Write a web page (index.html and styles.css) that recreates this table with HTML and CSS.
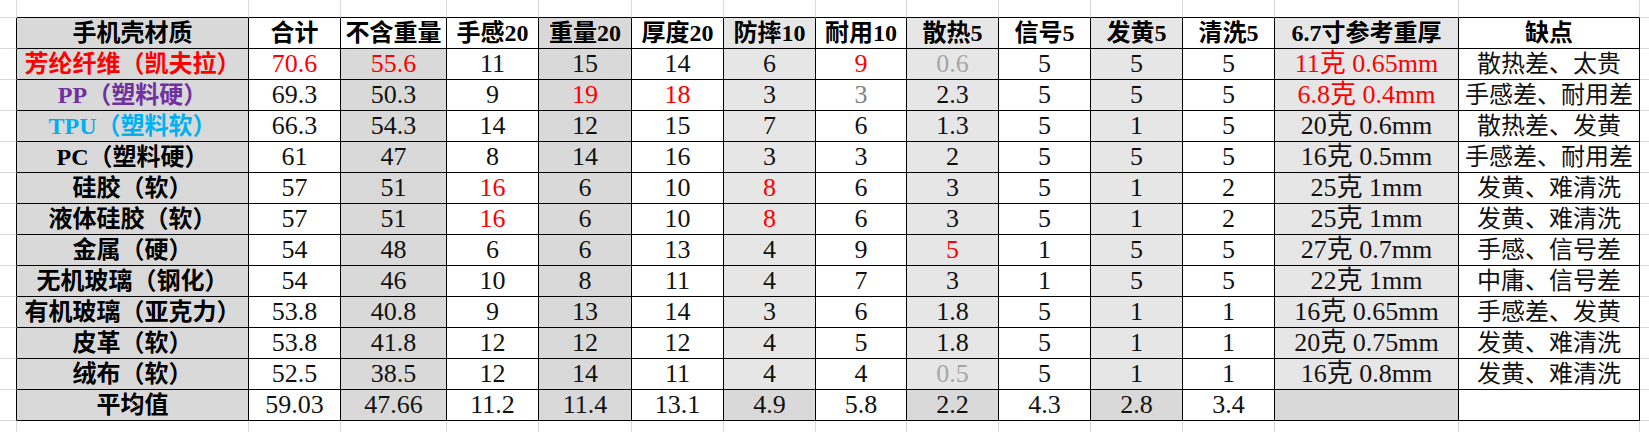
FILE: index.html
```html
<!DOCTYPE html>
<html lang="zh-CN">
<head>
<meta charset="utf-8">
<title>手机壳材质</title>
<link rel="stylesheet" href="styles.css">
</head>
<body>
<table class="sheet">
  <colgroup>
    <col class="c-gut">
    <col class="c-name fill-d">
    <col class="c-n">
    <col class="c-w fill-d">
    <col class="c-n">
    <col class="c-n3 fill-d">
    <col class="c-n">
    <col class="c-n fill-l">
    <col class="c-n1">
    <col class="c-n fill-l">
    <col class="c-n">
    <col class="c-n fill-l">
    <col class="c-n">
    <col class="c-ref fill-l">
    <col class="c-note">
    <col class="c-tail">
  </colgroup>
  <tr class="edge top">
    <td class="gut"></td><td></td><td></td><td></td><td></td><td></td><td></td><td></td><td></td><td></td><td></td><td></td><td></td><td></td><td></td><td class="gut end"></td>
  </tr>
  <tr class="head">
    <td class="gut"></td>
    <th>手机壳材质</th><th>合计</th><th class="white">不含重量</th><th>手感20</th><th>重量20</th><th>厚度20</th><th>防摔10</th><th>耐用10</th><th>散热5</th><th>信号5</th><th>发黄5</th><th>清洗5</th><th>6.7寸参考重厚</th><th>缺点</th>
    <td class="gut end"></td>
  </tr>
  <tr>
    <td class="gut"></td>
    <th class="r">芳纶纤维（凯夫拉）</th><td class="r">70.6</td><td class="r">55.6</td><td>11</td><td>15</td><td>14</td><td>6</td><td class="r">9</td><td class="gl">0.6</td><td>5</td><td>5</td><td>5</td><td class="r">11克 0.65mm</td><td class="note">散热差、太贵</td>
    <td class="gut end"></td>
  </tr>
  <tr>
    <td class="gut"></td>
    <th class="p">PP（塑料硬）</th><td>69.3</td><td>50.3</td><td>9</td><td class="r">19</td><td class="r">18</td><td>3</td><td class="gm">3</td><td>2.3</td><td>5</td><td>5</td><td>5</td><td class="r">6.8克 0.4mm</td><td class="note">手感差、耐用差</td>
    <td class="gut end"></td>
  </tr>
  <tr>
    <td class="gut"></td>
    <th class="b">TPU（塑料软）</th><td>66.3</td><td>54.3</td><td>14</td><td>12</td><td>15</td><td>7</td><td>6</td><td>1.3</td><td>5</td><td>1</td><td>5</td><td>20克 0.6mm</td><td class="note">散热差、发黄</td>
    <td class="gut end"></td>
  </tr>
  <tr>
    <td class="gut"></td>
    <th>PC（塑料硬）</th><td>61</td><td>47</td><td>8</td><td>14</td><td>16</td><td>3</td><td>3</td><td>2</td><td>5</td><td>5</td><td>5</td><td>16克 0.5mm</td><td class="note">手感差、耐用差</td>
    <td class="gut end"></td>
  </tr>
  <tr>
    <td class="gut"></td>
    <th>硅胶（软）</th><td>57</td><td>51</td><td class="r">16</td><td>6</td><td>10</td><td class="r">8</td><td>6</td><td>3</td><td>5</td><td>1</td><td>2</td><td>25克 1mm</td><td class="note">发黄、难清洗</td>
    <td class="gut end"></td>
  </tr>
  <tr class="short">
    <td class="gut"></td>
    <th>液体硅胶（软）</th><td>57</td><td>51</td><td class="r">16</td><td>6</td><td>10</td><td class="r">8</td><td>6</td><td>3</td><td>5</td><td>1</td><td>2</td><td>25克 1mm</td><td class="note">发黄、难清洗</td>
    <td class="gut end"></td>
  </tr>
  <tr>
    <td class="gut"></td>
    <th>金属（硬）</th><td>54</td><td>48</td><td>6</td><td>6</td><td>13</td><td>4</td><td>9</td><td class="r">5</td><td>1</td><td>5</td><td>5</td><td>27克 0.7mm</td><td class="note">手感、信号差</td>
    <td class="gut end"></td>
  </tr>
  <tr>
    <td class="gut"></td>
    <th>无机玻璃（钢化）</th><td>54</td><td>46</td><td>10</td><td>8</td><td>11</td><td>4</td><td>7</td><td>3</td><td>1</td><td>5</td><td>5</td><td>22克 1mm</td><td class="note">中庸、信号差</td>
    <td class="gut end"></td>
  </tr>
  <tr>
    <td class="gut"></td>
    <th>有机玻璃（亚克力）</th><td>53.8</td><td>40.8</td><td>9</td><td>13</td><td>14</td><td>3</td><td>6</td><td>1.8</td><td>5</td><td>1</td><td>1</td><td>16克 0.65mm</td><td class="note">手感差、发黄</td>
    <td class="gut end"></td>
  </tr>
  <tr>
    <td class="gut"></td>
    <th>皮革（软）</th><td>53.8</td><td>41.8</td><td>12</td><td>12</td><td>12</td><td>4</td><td>5</td><td>1.8</td><td>5</td><td>1</td><td>1</td><td>20克 0.75mm</td><td class="note">发黄、难清洗</td>
    <td class="gut end"></td>
  </tr>
  <tr>
    <td class="gut"></td>
    <th>绒布（软）</th><td>52.5</td><td>38.5</td><td>12</td><td>14</td><td>11</td><td>4</td><td>4</td><td class="gl">0.5</td><td>5</td><td>1</td><td>1</td><td>16克 0.8mm</td><td class="note">发黄、难清洗</td>
    <td class="gut end"></td>
  </tr>
  <tr class="avg">
    <td class="gut"></td>
    <th>平均值</th><td>59.03</td><td>47.66</td><td>11.2</td><td>11.4</td><td>13.1</td><td class="dark">4.9</td><td>5.8</td><td class="dark">2.2</td><td>4.3</td><td class="dark">2.8</td><td>3.4</td><td class="dark"></td><td class="note"></td>
    <td class="gut end"></td>
  </tr>
  <tr class="edge bottom">
    <td class="gut"></td><td></td><td></td><td></td><td></td><td></td><td></td><td></td><td></td><td></td><td></td><td></td><td></td><td></td><td></td><td class="gut end"></td>
  </tr>
</table>
</body>
</html>
```

FILE: styles.css
```css
html, body {
  margin: 0;
  padding: 0;
  background: #ffffff;
  overflow: hidden;
}

.sheet {
  border-collapse: separate;
  border-spacing: 0;
  table-layout: fixed;
  width: 1680px;
  font-family: "Liberation Serif", "Noto Sans CJK SC", serif;
  font-size: 24px;
  color: #000000;
}

.c-gut { width: 17px; }
.c-name { width: 232px; }
.c-n { width: 92px; }
.c-n1 { width: 91px; }
.c-n3 { width: 93px; }
.c-w { width: 106px; }
.c-ref { width: 184px; }
.c-note { width: 181px; }
.c-tail { width: 40px; }

.fill-d { background: #d9d9d9; }
.fill-l { background: #e7e6e6; }

.sheet td,
.sheet th {
  box-sizing: border-box;
  padding: 0;
  height: 31px;
  line-height: 30px;
  text-align: center;
  vertical-align: middle;
  white-space: nowrap;
  overflow: hidden;
  border-right: 1px solid #000000;
  border-bottom: 1px solid #000000;
}

.sheet th {
  font-weight: 700;
  font-size: 24px;
}

.sheet td {
  font-weight: 400;
  font-size: 26px;
  color: #111111;
}

.sheet td.note {
  font-size: 24px;
}

.sheet tr.short td,
.sheet tr.short th {
  height: 30px;
}

/* spreadsheet gridlines outside the bordered block */
.sheet td.gut {
  background: #ffffff;
  border-right: 1px solid #000000;
  border-bottom: 1px solid #dadada;
}

.sheet td.gut.end {
  border-right: none;
}

.sheet tr.edge td {
  background: #ffffff;
  border-right: 1px solid #dadada;
}

.sheet tr.top td {
  height: 18px;
  border-bottom: 1px solid #000000;
}

.sheet tr.bottom td {
  height: 20px;
  border-bottom: none;
}

.sheet tr.edge td.gut {
  border-bottom: 1px solid #dadada;
}

.sheet tr.bottom td.gut {
  border-bottom: none;
}

.sheet tr.edge td.gut.end {
  border-right: none;
}

.head .white { background: #ffffff; }
.avg .dark { background: #d9d9d9; }

.sheet .r { color: #ff0000; }
.sheet .p { color: #7030a0; }
.sheet .b { color: #00b0f0; }
.sheet .gl { color: #a6a6a6; }
.sheet .gm { color: #808080; }
```
